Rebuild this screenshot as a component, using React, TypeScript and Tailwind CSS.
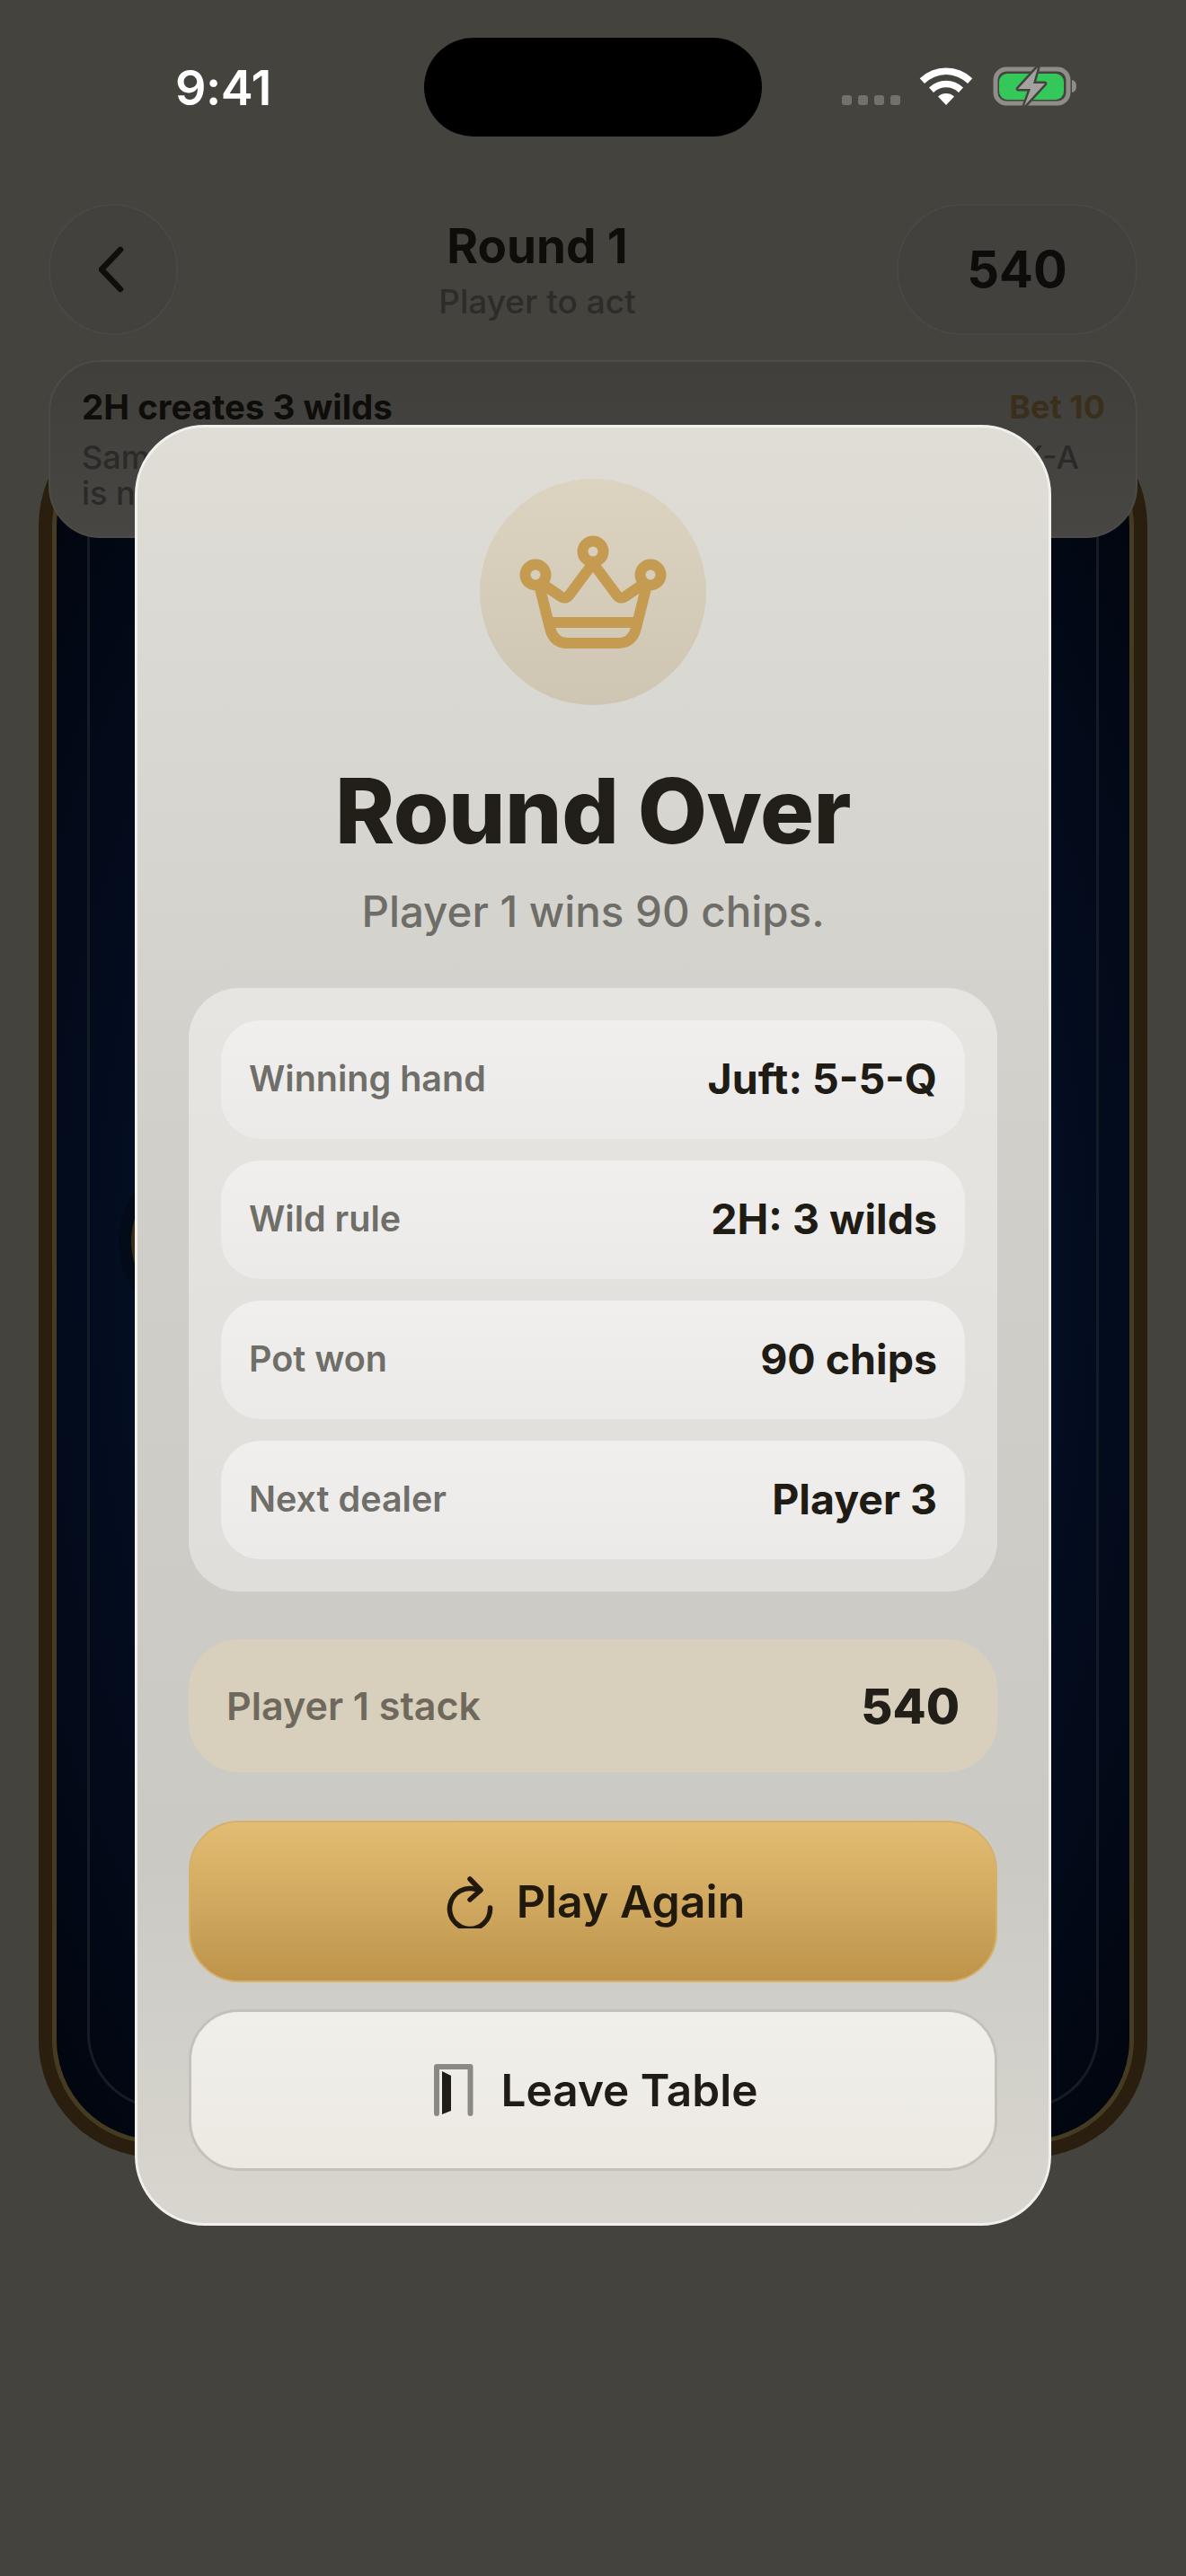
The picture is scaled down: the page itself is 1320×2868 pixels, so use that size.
import React from 'react';

const StatusBar = () => (
  <div className="relative flex h-[227px] items-start justify-between pl-[195px] pr-[120px]">
    <span className="mt-[67px] text-[54px] leading-[62px] font-semibold tracking-[-0.5px] text-white">9:41</span>
    <div className="absolute left-[472px] top-[42px] h-[110px] w-[376px] rounded-[55px] bg-black" />
    <svg width="270" height="60" viewBox="930 70 270 60" className="mt-[70px]" fill="none">
      {[937, 955, 973, 991].map(x => (
        <rect key={x} x={x} y="106" width="11" height="11" rx="3" fill="#72716c" />
      ))}
      <path d="M1023.7 87.3 A42 42 0 0 1 1082.3 87.3 L1077 93 A34 34 0 0 0 1029 93 Z" fill="#fff" />
      <path d="M1034 97.5 A27 27 0 0 1 1072 97.5 L1067 103 A20 20 0 0 0 1039 103 Z" fill="#fff" />
      <path d="M1044 107.5 A13.5 13.5 0 0 1 1062 107.5 L1053 117 Z" fill="#fff" />
      <rect x="1108" y="77" width="81" height="38" rx="12" stroke="#8e8d88" strokeWidth="5" />
      <rect x="1112" y="82" width="72" height="29" rx="9" fill="#34c759" />
      <path d="M1193 89 Q1198 90 1198 96 Q1198 102 1193 103 Z" fill="#8e8d88" />
      <path d="M1155 75 L1133 99 L1147 99 L1140 118 L1163 93 L1150 93 Z" fill="#a3a29e" stroke="#44433e" strokeWidth="5" strokeLinejoin="round" paintOrder="stroke" />
    </svg>
  </div>
);

const Header = () => (
  <div className="flex h-[146px] items-center justify-between px-[54px]">
    <div className="flex h-[146px] w-[144px] items-center justify-center rounded-full border-2 border-[#494844] bg-[#42413d]">
      <svg width="32" height="52" viewBox="0 0 32 52" fill="none">
        <path d="M27 4 L6 26 L27 48" stroke="#0f0e0b" strokeWidth="6.5" strokeLinecap="round" strokeLinejoin="round" transform="translate(-3 0)" />
      </svg>
    </div>
    <div className="flex flex-col items-center">
      <span className="text-[53px] leading-[64px] font-bold text-[#0e0d0a]">Round 1</span>
      <span className="mt-[8px] text-[37px] leading-[44px] font-medium text-[#2d2c29]">Player to act</span>
    </div>
    <div className="flex h-[146px] w-[268px] items-center justify-center rounded-[72px] border-2 border-[#494844] bg-[#42413d] text-[56px] font-bold text-[#0d0c0a]">
      540
    </div>
  </div>
);

const RuleCard = () => (
  <div className="relative z-10 mx-[54px] mt-[28px] h-[198px] rounded-[58px] border-2 border-[#4c4b48] bg-gradient-to-b from-[#403f3c] to-[#474643] pt-[27px] pr-[34px] pl-[35px]">
    <div className="flex items-center justify-between">
      <span className="text-[38.5px] leading-[46px] font-bold text-[#0e0d0a]">2H creates 3 wilds</span>
      <span className="text-[36px] leading-[46px] font-bold text-[#3b2f1b]">Bet 10</span>
    </div>
    <div className="mt-[13px] text-[36px] leading-[40px] font-medium text-[#2b2a28]">
      <div className="flex justify-between pr-[29px]">
        <span>Same ranks beat all, then straights;</span>
        <span>X-A</span>
      </div>
      <div>is next</div>
    </div>
  </div>
);

const Table = () => (
  <div className="relative mx-[43px] -mt-[144px] h-[1947px] rounded-[130px] bg-[#2a1f0e] p-[15px]">
    <div className="h-full rounded-[116px] border-[5px] border-[#453a22] bg-[radial-gradient(ellipse_at_center,#0a1a33_0%,#05112a_45%,#01050d_100%)] p-[34px]">
      <div className="h-full rounded-[84px] border-[3px] border-[#151c25]" />
    </div>
    <div className="absolute left-[89px] top-[834px] flex h-[186px] w-[186px] items-center justify-center rounded-full bg-[#030b18]">
      <div className="h-[158px] w-[158px] rounded-full bg-[#3a2d18]" />
    </div>
  </div>
);

const Row = ({ label, value }: { label: string; value: string }) => (
  <div className="flex h-[132px] items-center justify-between rounded-[44px] bg-gradient-to-b from-[#f0efed] to-[#ebeae8] px-[31px]">
    <span className="text-[39.5px] font-semibold text-[#6f6e69]">{label}</span>
    <span className="text-[46.5px] font-bold text-[#1f1b15]">{value}</span>
  </div>
);

const rows = [
  { label: 'Winning hand', value: 'Juft: 5-5-Q' },
  { label: 'Wild rule', value: '2H: 3 wilds' },
  { label: 'Pot won', value: '90 chips' },
  { label: 'Next dealer', value: 'Player 3' },
];

const RoundOverModal = () => (
  <div className="absolute left-[150px] top-[473px] z-20 flex h-[2005px] w-[1020px] flex-col rounded-[78px] border-[3px] border-[#f1f0ec] bg-[linear-gradient(180deg,#dfddd6_0%,#d0cfca_40%,#cac9c4_80%,#d8d6ce_100%)] px-[57px] pt-[57px]">
    <div className="flex h-[252px] w-[252px] items-center justify-center self-center rounded-full bg-gradient-to-b from-[#dcd3c1] to-[#cec5b3]">
      <svg width="180" height="180" viewBox="570 570 180 180" fill="none" stroke="#c49b50" strokeWidth="12" strokeLinecap="round" strokeLinejoin="round">
        <circle cx="660" cy="615" r="11.5" />
        <circle cx="596" cy="641" r="11.5" />
        <circle cx="724" cy="641" r="11.5" />
        <path d="M605 652 L624 665 Q630 669 634 663 L660 628 L686 663 Q690 669 696 665 L715 652" />
        <path d="M600 652 L612 700 Q616 717 632 717 H688 Q704 717 708 700 L720 652" />
        <path d="M612 694 H708" strokeLinecap="butt" />
      </svg>
    </div>
    <h1 className="mt-[60px] text-center text-[100px] leading-[116px] font-extrabold tracking-[-0.5px] text-[#221e18]">Round Over</h1>
    <p className="mt-[27px] text-center text-[47.5px] leading-[54px] font-medium text-[#6e6d68]">Player 1 wins 90 chips.</p>
    <div className="mt-[58px] flex h-[672px] flex-col gap-[24px] rounded-[56px] bg-gradient-to-b from-[#e6e5e2] to-[#dfdedb] p-[36px]">
      {rows.map(row => (
        <Row key={row.label} {...row} />
      ))}
    </div>
    <div className="mt-[53px] flex h-[148px] items-center justify-between rounded-[56px] bg-[#d8d0bd] px-[42px]">
      <span className="text-[43px] font-semibold text-[#6e695c]">Player 1 stack</span>
      <span className="text-[54px] font-extrabold text-[#221e18]">540</span>
    </div>
    <button className="mt-[54px] flex h-[180px] items-center justify-center gap-[22px] rounded-[56px] border-2 border-[#d6b06a] bg-gradient-to-b from-[#e3bd73] to-[#be944b] pl-[2px] text-[50px] font-semibold text-[#211a0c]">
      <svg width="60" height="60" viewBox="490 2085 60 60" fill="none" stroke="#211a0c" strokeWidth="5.5" strokeLinecap="round" strokeLinejoin="round">
        <path d="M542.5 2122 A22.5 22.5 0 1 1 528 2102" />
        <path d="M520 2090 L532 2102.5 L520 2113" />
      </svg>
      Play Again
    </button>
    <button className="mt-[30px] flex h-[180px] items-center justify-center gap-[31px] rounded-[56px] border-[3px] border-[#c4c1ba] bg-gradient-to-b from-[#f1efe9] to-[#ebe9e2] pl-[6px] text-[49.5px] font-semibold text-[#1f1b15]">
      <svg width="44" height="58" viewBox="484 2300 44 58" fill="none">
        <path d="M487 2355 V2303 H524.5 V2355" stroke="#8b8983" strokeWidth="6" strokeLinecap="round" strokeLinejoin="round" />
        <path d="M493 2308 L503 2313 V2352 L493 2356 Z" fill="#201c16" />
      </svg>
      Leave Table
    </button>
  </div>
);

export default function App() {
  return (
    <div className="relative h-[2868px] w-[1320px] overflow-hidden bg-[#44433e] font-['Inter',sans-serif]">
      <StatusBar />
      <Header />
      <RuleCard />
      <Table />
      <RoundOverModal />
    </div>
  );
}
